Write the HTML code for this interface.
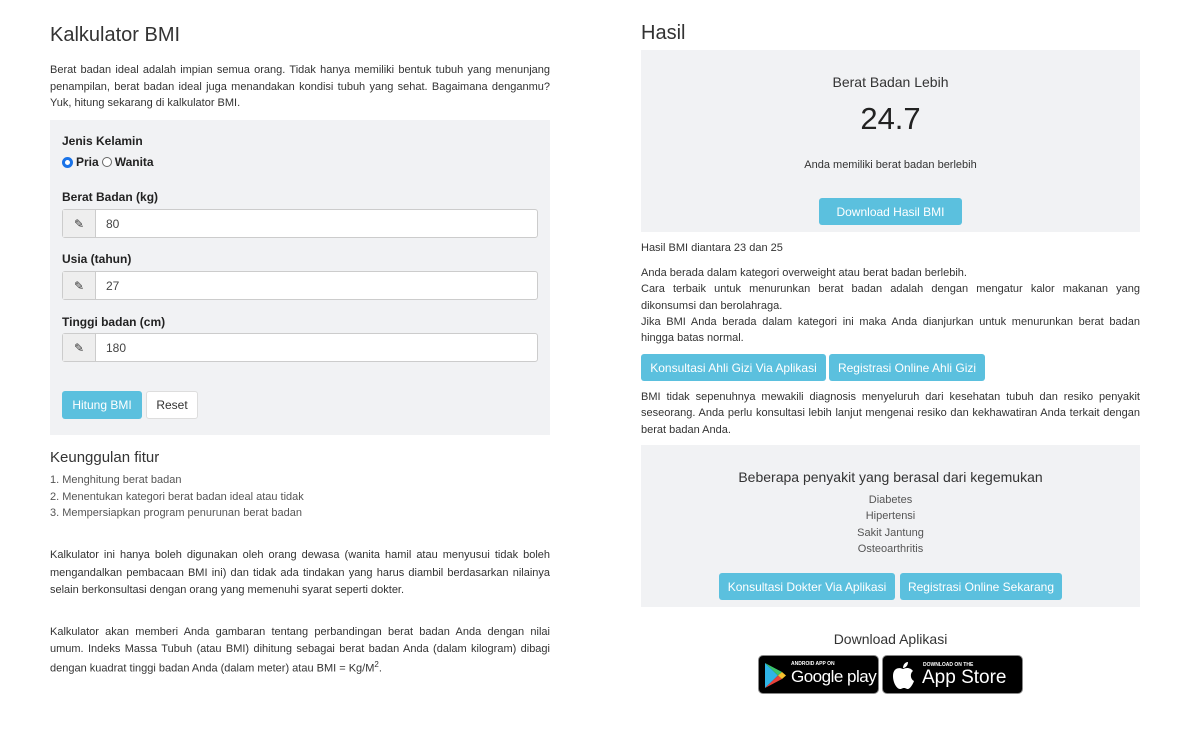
<!DOCTYPE html>
<html><head><meta charset="utf-8"><style>
*{box-sizing:border-box;margin:0;padding:0}
body{width:1189px;height:732px;background:#fff;font-family:"Liberation Sans",sans-serif;color:#333;position:relative;overflow:hidden}
.a{position:absolute}
.p{font-size:11px;line-height:16.5px;text-align:justify;color:#333}
.panel{background:#f1f2f4}
.lbl{font-size:12px;font-weight:bold;color:#222}
.inp{position:absolute;left:12px;width:476px;height:29px;border:1px solid #ccc;border-radius:3px;background:#fff;font-size:12px}
.inp .ad{position:absolute;left:0;top:0;width:33px;height:27px;background:#eee;border-right:1px solid #ccc;display:flex;align-items:center;justify-content:center}
.inp span{position:absolute;left:43px;top:7px;color:#444}
.btn{position:absolute;background:#5bc0de;color:#fff;font-size:12px;border-radius:3px;display:flex;align-items:center;justify-content:center;height:27px}
.c{text-align:center}
</style></head><body>
<div class="a" style="left:50px;top:24px;font-size:20px;color:#333">Kalkulator BMI</div>
<div class="a p" style="left:50px;top:62px;width:500px">Berat badan ideal adalah impian semua orang. Tidak hanya memiliki bentuk tubuh yang menunjang penampilan, berat badan ideal juga menandakan kondisi tubuh yang sehat. Bagaimana denganmu? Yuk, hitung sekarang di kalkulator BMI.</div>

<div class="a panel" style="left:50px;top:120px;width:500px;height:315px">
<div class="a lbl" style="left:12px;top:14px">Jenis Kelamin</div>
<div class="a lbl" style="left:12px;top:35px;display:flex;align-items:center"><span style="display:inline-block;width:11px;height:11px;border-radius:50%;border:3px solid #1a73e8;margin-right:3px;background:#fff"></span>Pria <span style="display:inline-block;width:10px;height:10px;border-radius:50%;border:1px solid #666;margin:0 3px;background:#fff"></span>Wanita</div>
<div class="a lbl" style="left:12px;top:70px">Berat Badan (kg)</div>
<div class="inp" style="top:89px"><div class="ad">✎</div><span>80</span></div>
<div class="a lbl" style="left:12px;top:132px">Usia (tahun)</div>
<div class="inp" style="top:151px"><div class="ad">✎</div><span>27</span></div>
<div class="a lbl" style="left:12px;top:195px">Tinggi badan (cm)</div>
<div class="inp" style="top:213px"><div class="ad">✎</div><span>180</span></div>
<div class="btn" style="left:12px;top:271px;width:80px;height:28px">Hitung BMI</div>
<div class="btn" style="left:96px;top:271px;width:52px;height:28px;background:#fff;color:#333;border:1px solid #ddd">Reset</div>
</div>

<div class="a" style="left:50px;top:449px;font-size:15px">Keunggulan fitur</div>
<div class="a p" style="left:50px;top:472px;color:#555">1. Menghitung berat badan<br>2. Menentukan kategori berat badan ideal atau tidak<br>3. Mempersiapkan program penurunan berat badan</div>
<div class="a p" style="left:50px;top:547px;width:500px;line-height:17.5px">Kalkulator ini hanya boleh digunakan oleh orang dewasa (wanita hamil atau menyusui tidak boleh mengandalkan pembacaan BMI ini) dan tidak ada tindakan yang harus diambil berdasarkan nilainya selain berkonsultasi dengan orang yang memenuhi syarat seperti dokter.</div>
<div class="a p" style="left:50px;top:624px;width:500px">Kalkulator akan memberi Anda gambaran tentang perbandingan berat badan Anda dengan nilai umum. Indeks Massa Tubuh (atau BMI) dihitung sebagai berat badan Anda (dalam kilogram) dibagi dengan kuadrat tinggi badan Anda (dalam meter) atau BMI = Kg/M<sup style="font-size:8px">2</sup>.</div>

<div class="a" style="left:641px;top:22px;font-size:20px">Hasil</div>
<div class="a panel" style="left:641px;top:50px;width:499px;height:182px">
<div class="a c" style="left:0;width:499px;top:24px;font-size:14px">Berat Badan Lebih</div>
<div class="a c" style="left:0;width:499px;top:51px;font-size:31px;color:#222">24.7</div>
<div class="a c" style="left:0;width:499px;top:109px;font-size:11px">Anda memiliki berat badan berlebih</div>
<div class="btn" style="left:178px;top:148px;width:143px">Download Hasil BMI</div>
</div>
<div class="a p" style="left:641px;top:240px">Hasil BMI diantara 23 dan 25</div>
<div class="a p" style="left:641px;top:265px;width:499px;line-height:16.3px">Anda berada dalam kategori overweight atau berat badan berlebih.<br>Cara terbaik untuk menurunkan berat badan adalah dengan mengatur kalor makanan yang dikonsumsi dan berolahraga.<br>Jika BMI Anda berada dalam kategori ini maka Anda dianjurkan untuk menurunkan berat badan hingga batas normal.</div>
<div class="btn" style="left:641px;top:354px;width:185px">Konsultasi Ahli Gizi Via Aplikasi</div>
<div class="btn" style="left:829px;top:354px;width:156px">Registrasi Online Ahli Gizi</div>
<div class="a p" style="left:641px;top:389px;width:499px;line-height:16.3px">BMI tidak sepenuhnya mewakili diagnosis menyeluruh dari kesehatan tubuh dan resiko penyakit seseorang. Anda perlu konsultasi lebih lanjut mengenai resiko dan kekhawatiran Anda terkait dengan berat badan Anda.</div>
<div class="a panel" style="left:641px;top:445px;width:499px;height:162px">
<div class="a c" style="left:0;width:499px;top:24px;font-size:14px">Beberapa penyakit yang berasal dari kegemukan</div>
<div class="a c" style="left:0;width:499px;top:47px;font-size:11px;line-height:16.3px;color:#555">Diabetes<br>Hipertensi<br>Sakit Jantung<br>Osteoarthritis</div>
<div class="btn" style="left:78px;top:128px;width:176px">Konsultasi Dokter Via Aplikasi</div>
<div class="btn" style="left:259px;top:128px;width:162px">Registrasi Online Sekarang</div>
</div>
<div class="a c" style="left:641px;width:499px;top:631px;font-size:14px">Download Aplikasi</div>
<div class="a" style="left:758px;top:655px;width:121px;height:39px;background:#000;border-radius:5px;border:1px solid #888;color:#fff">
<svg class="a" style="left:4px;top:6px" width="24" height="27" viewBox="0 0 24 27"><path d="M2 1 L15 13.5 L2 26Z" fill="#2fb5e8"/><path d="M2 1 L19 10 L15 13.5Z" fill="#3cc46a"/><path d="M2 26 L19 17 L15 13.5Z" fill="#e8423c"/><path d="M19 10 L23 13.5 L19 17 L15 13.5Z" fill="#f7c12e"/></svg>
<div class="a" style="left:32px;top:5px;font-size:5px;font-weight:bold">ANDROID APP ON</div>
<div class="a" style="left:32px;top:11px;font-size:17px;letter-spacing:-0.5px">Google play</div>
</div>
<div class="a" style="left:882px;top:655px;width:141px;height:39px;background:#000;border-radius:5px;border:1px solid #888;color:#fff">
<svg class="a" style="left:7px;top:5px" width="26" height="29" viewBox="0 0 26 29"><path d="M13 8 C9 6 3 7 3 15 C3 22 7 28 10 28 C12 28 12 27 14 27 C16 27 16 28 18 28 C20 28 23 23 24 20 C20 18 20 12 23 10 C21 7 17 6 13 8Z" fill="#fff"/><path d="M13 7 C13 4 15 1 18 1 C18 4 16 7 13 7Z" fill="#fff"/></svg>
<div class="a" style="left:40px;top:6px;font-size:5px;font-weight:bold">DOWNLOAD ON THE</div>
<div class="a" style="left:39px;top:11px;font-size:19px">App Store</div>
</div>
</body></html>
